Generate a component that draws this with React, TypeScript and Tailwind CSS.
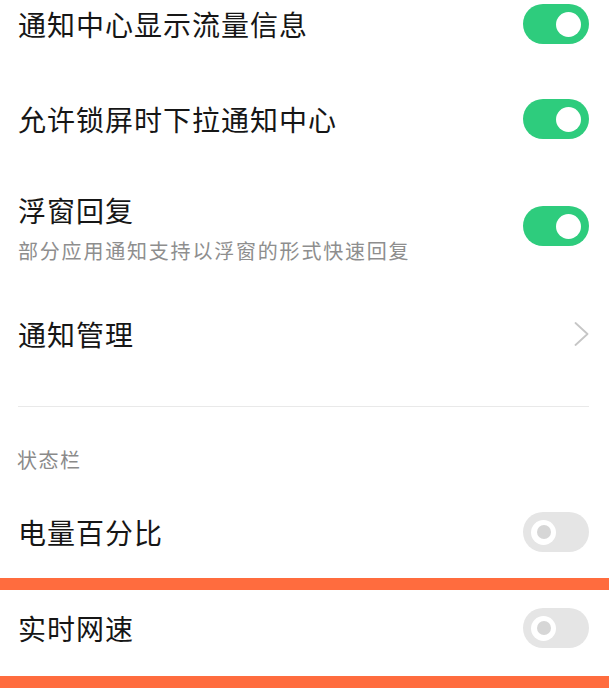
const font = { fontFamily: '"Noto Sans CJK SC", "Noto Sans", sans-serif' };

function Toggle({ on }: { on: boolean }) {
  if (on) {
    return (
      <div className="flex h-[40px] w-[66px] shrink-0 items-center justify-end rounded-full bg-[#2ecc7d] pr-[8px]">
        <div className="h-[25px] w-[25px] rounded-full bg-white" />
      </div>
    );
  }
  return (
    <div className="flex h-[40px] w-[66px] shrink-0 items-center rounded-full bg-[#e5e5e5] pl-[8px]">
      <div className="flex h-[25px] w-[25px] items-center justify-center rounded-full bg-white">
        <div className="h-[14px] w-[14px] rounded-full bg-[#d6d6d6]" />
      </div>
    </div>
  );
}

function Chevron() {
  return (
    <svg width="15" height="24" viewBox="0 0 15 24" fill="none" className="shrink-0">
      <polyline points="1.5,1 13.5,12 1.5,23" stroke="#c6c6c6" strokeWidth="1.8" strokeLinejoin="round" strokeLinecap="round" />
    </svg>
  );
}

function Row({ title, on, h }: { title: string; on: boolean; h: string }) {
  return (
    <div className={`flex items-center justify-between pl-[18px] pr-[20px] ${h}`}>
      <span className="text-[28px] leading-[32px] tracking-[1px] text-[#161616]">{title}</span>
      <Toggle on={on} />
    </div>
  );
}

export default function App() {
  return (
    <div className="h-[694px] w-[609px] overflow-hidden bg-white" style={font}>
      <Row title="通知中心显示流量信息" on h="h-[48px]" />
      <Row title="允许锁屏时下拉通知中心" on h="h-[142px]" />

      <div className="flex h-[100px] items-start justify-between pl-[18px] pr-[20px]">
        <div className="flex flex-col pt-[4px]">
          <span className="text-[28px] leading-[32px] tracking-[1px] text-[#161616]">浮窗回复</span>
          <span className="mt-[12px] text-[20px] leading-[26px] tracking-[1.8px] text-[#8e8e8e]">
            部分应用通知支持以浮窗的形式快速回复
          </span>
        </div>
        <div className="mt-[16px]">
          <Toggle on />
        </div>
      </div>

      <div className="flex h-[88px] items-center justify-between pl-[18px] pr-[20px]">
        <span className="text-[28px] leading-[32px] tracking-[1px] text-[#161616]">通知管理</span>
        <Chevron />
      </div>

      <div className="h-[28px]" />
      <div className="mx-[18px] mr-[20px] h-px bg-[#e9e9e9]" />

      <div className="flex h-[83px] items-end pl-[17px] pb-[13px]">
        <span className="text-[20px] leading-[34px] tracking-[1.5px] text-[#8a8a8a]">状态栏</span>
      </div>

      <Row title="电量百分比" on={false} h="h-[84px]" />
      <div className="h-[4px]" />
      <div className="h-[12px] bg-[#ff6c3e]" />

      <Row title="实时网速" on={false} h="h-[76px]" />
      <div className="h-[10px]" />
      <div className="h-[12px] bg-[#ff6c3e]" />
    </div>
  );
}
